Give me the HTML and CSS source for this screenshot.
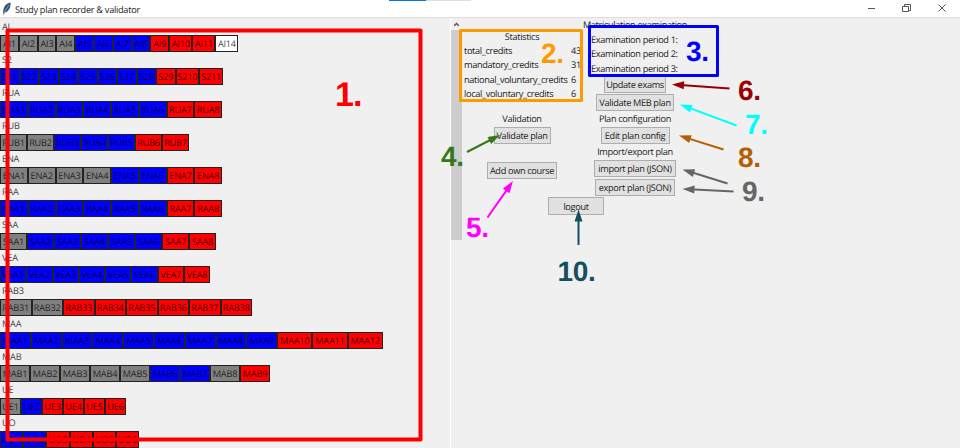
FILE: index.html
```
<!DOCTYPE html>
<html lang="en">
<head>
<meta charset="utf-8">
<title>Study plan recorder &amp; validator</title>
<link rel="stylesheet" href="styles.css">
</head>
<body>
<div class="window">
  <header class="titlebar">
    <svg class="feather" width="10" height="14" viewBox="0 0 10 14"><path d="M1.5 12.5C0 6 4 1 8.500 .5C9 5 7 9.500 3 10.500Z" fill="#34566f"/><path d="M1 13.500L3 9L7 3" stroke="#8fb4cc" fill="none" stroke-width=".8"/></svg>
    <h1>Study plan recorder &amp; validator</h1>
    <div class="snap"><i></i></div>
    <svg class="controls" width="82" height="12" viewBox="0 0 82 12" fill="none" stroke="#555" stroke-width="1"><path d="M4 6.500H11M38.500 4.500H44.500V9.500H38.500ZM40.500 4.500V2.500H46.500V8.500H44.500"/><path d="M74.500 2.500L81.500 9.500M81.500 2.500L74.500 9.500"/></svg>
  </header>
  <main class="body">
    <section class="courses" id="courses"></section>
    <div class="scrollbar"><svg width="11" height="13" viewBox="0 0 11 13"><path d="M3 8.500L5.500 6L8 8.500" fill="none" stroke="#505050" stroke-width="1.500"/></svg><div class="thumb"></div></div>
    <section class="panel">
      <div class="columns">
        <div class="column left">
          <h2>Statistics</h2>
          <dl class="stats">
            <dt>total_credits</dt><dd>43</dd>
            <dt>mandatory_credits</dt><dd>31</dd>
            <dt>national_voluntary_credits</dt><dd>6</dd>
            <dt>local_voluntary_credits</dt><dd>6</dd>
          </dl>
          <h2 class="validation">Validation</h2>
          <button class="validate">Validate plan</button>
          <button class="add">Add own course</button>
        </div>
        <div class="column right">
          <h2 class="matric">Matriculation examination</h2>
          <ul class="exams"><li>Examination period 1:</li><li>Examination period 2:</li><li>Examination period 3:</li></ul>
          <button class="update">Update exams</button>
          <button class="meb">Validate MEB plan</button>
          <h2>Plan configuration</h2>
          <button class="edit">Edit plan config</button>
          <h2>Import/export plan</h2>
          <button class="import">import plan (JSON)</button>
          <button class="export">export plan (JSON)</button>
        </div>
      </div>
      <button class="logout">logout</button>
    </section>
  </main>
  <svg class="notes" width="960" height="448" viewBox="0 0 960 448">
    <g fill="none" stroke-linejoin="round">
      <rect x="7.500" y="30.500" width="413" height="409" stroke="#f00" stroke-width="4"/>
      <rect x="460.500" y="30.500" width="121" height="70" stroke="#ff9900" stroke-width="3"/>
      <rect x="589.500" y="26.500" width="128" height="49" stroke="#00f" stroke-width="3"/>
    </g>
    <g class="numbers">
      <text x="335" y="106" fill="#f00" class="large">1.</text>
      <text x="541" y="62.500" fill="#ff9900">2.</text>
      <text x="686" y="60.500" fill="#00f">3.</text>
      <text x="441" y="166" fill="#38761d">4.</text>
      <text x="466" y="236.500" fill="#f0f">5.</text>
      <text x="738" y="99.500" fill="#990000">6.</text>
      <text x="745" y="134" fill="#0ff">7.</text>
      <text x="738" y="166.500" fill="#b45f06">8.</text>
      <text x="742" y="200.500" fill="#666">9.</text>
      <text x="557.500" y="281" fill="#134f5c">10.</text>
    </g>
    <g id="arrows"></g>
  </svg>
</div>
<script src="app.js"></script>
</body>
</html>
```
FILE: styles.css
```
* { box-sizing: border-box; }
body { margin: 0; overflow: hidden; font: 9.2px/14px "Open Sans", "Noto Sans", sans-serif; letter-spacing: -.34px; text-rendering: geometricPrecision; color: #1c1c1c; }
h1, h2, dl, dd, ul { margin: 0; padding: 0; font-size: inherit; font-weight: 400; }
ul { list-style: none; }
.window { position: relative; width: 960px; height: 448px; overflow: hidden; background: #f0f0f0; display: flex; flex-direction: column; }
.titlebar { height: 18px; flex: none; display: flex; background: #fff; border-bottom: 1px solid #dedede; }
.feather { margin: 2px 3px 0 2px; }
.titlebar h1 { width: 374px; font-size: 9.2px; letter-spacing: -.29px; line-height: 19px; white-space: nowrap; }
.snap { width: 82px; height: 1px; background: #ddd; }
.snap i { display: block; width: 37px; height: 1px; background: #0078d7; }
.controls { margin: 2px 14px 0 auto; }
.body { flex: 1; display: flex; min-height: 0; }
.courses { width: 451px; padding-top: 1px; border-right: 1px solid #fff; overflow: hidden; letter-spacing: -.22px; }
.group { height: 33px; }
.group h2 { height: 16px; line-height: 16px; padding-left: 2px; color: #444; }
.cells { display: flex; height: 17px; }
.cell { flex: none; border: 1px solid #222; line-height: 16px; text-align: center; white-space: nowrap; color: rgba(0, 0, 0, .75); overflow: hidden; }
.gray { background: #808080; }
.blue { background: #00f; }
.red { background: #f00; }
.white { background: #fff; }
.scrollbar { width: 11px; height: 448px; }
.scrollbar svg { display: block; height: 12px; }
.thumb { height: 210px; background: #cdcdcd; }
.panel { width: 240px; display: flex; flex-direction: column; }
.columns { display: flex; height: 179px; flex: none; }
.column { display: flex; flex-direction: column; align-items: center; white-space: nowrap; }
.left { width: 120px; padding-top: 12px; }
.right { width: 106px; }
.stats { display: grid; grid-template-columns: 107px auto; width: 116px; grid-auto-rows: 14.3px; }
.validation { margin-top: 11px; }
.exams { margin-top: 1px; line-height: 14.3px; width: 88px; }
button { flex: none; height: 17px; padding: 0; border: 1px solid #adadad; background: #e1e1e1; color: inherit; font: inherit; letter-spacing: inherit; text-rendering: inherit; line-height: 15px; white-space: nowrap; }
.validate { width: 57px; margin-top: 1px; }
.add { width: 70px; margin-top: 18px; }
.update { width: 62px; }
.meb { width: 78px; margin: 1px 0; }
.edit { width: 69px; margin: 1px 0; }
.import { width: 82px; margin-top: 1px; }
.export { width: 80px; margin-top: 2px; }
.logout { width: 56px; height: 18px; margin-left: 86px; }
.notes { position: absolute; inset: 0; pointer-events: none; }
.numbers { font: bold 28px "Liberation Sans", sans-serif; letter-spacing: -.3px; }
.large { font-size: 34px; letter-spacing: -1px; }
```
FILE: app.js
```
// name, prefix, statuses, cell width, first wide cell index, wide cell width
const groups = [
  ["AI", "AI", "ggggbbbbrrrw", 18.8, 9, 23.1],
  ["S2", "S2", "bbbbbbbbrrr", 19.5, 9, 23.8],
  ["RUA", "RUA", "bbbbbbrr", 27.75],
  ["RUB", "RUB", "ggbbbrr", 27],
  ["ENA", "ENA", "ggggbbrr", 27.75],
  ["RAA", "RAA", "bbbbbbrr", 27.75],
  ["SAA", "SAA", "gbbbbbrr", 27],
  ["VEA", "VEA", "bbbbbbrr", 26.25],
  ["RAB3", "RAB3", "ggrrrrrr", 31.5],
  ["MAA", "MAA", "bbbbbbbbbrrr", 30.8, 9, 35.2],
  ["MAB", "MAB", "gggggbbgr", 30],
  ["UE", "UE", "gbrrrr", 21],
  ["UO", "UO", "bbrrrr", 23.2]
];
const colours = { g: "gray", b: "blue", r: "red", w: "white" };
document.getElementById("courses").innerHTML = groups.map(([name, prefix, states, width, wideFrom, wide]) =>
  `<div class="group"><h2>${name}</h2><div class="cells">${[...states].map((s, i) =>
    `<div class="cell ${colours[s]}" style="width:${i >= wideFrom ? wide : width}px">${prefix}${s === "w" ? 14 : i + 1}</div>`).join("")}</div></div>`).join("");

// tail x, tail y, tip x, tip y, colour
const arrows = [
  [467, 152, 500, 135, "#38761d"],
  [487.5, 217.5, 513, 181, "#f0f"],
  [729.5, 88.500, 672, 84.500, "#990000"],
  [736.5, 125.500, 680, 104.500, "#0ff"],
  [723.5, 149.500, 679, 135.500, "#b45f06"],
  [727.5, 183.500, 682.5, 169.500, "#666"],
  [733.5, 191.500, 682.5, 189, "#666"],
  [578.5, 245, 578.5, 209.500, "#134f5c"]
];
document.getElementById("arrows").innerHTML = arrows.map(([x1, y1, x2, y2, c]) => {
  const length = Math.hypot(x2 - x1, y2 - y1);
  const angle = Math.atan2(y2 - y1, x2 - x1) * 180 / Math.PI;
  return `<g transform="translate(${x1} ${y1}) rotate(${angle})" fill="${c}"><path d="M0 -1H${length - 12}V-4L${length} 0L${length - 12} 4V1H0Z"/></g>`;
}).join("");
```
